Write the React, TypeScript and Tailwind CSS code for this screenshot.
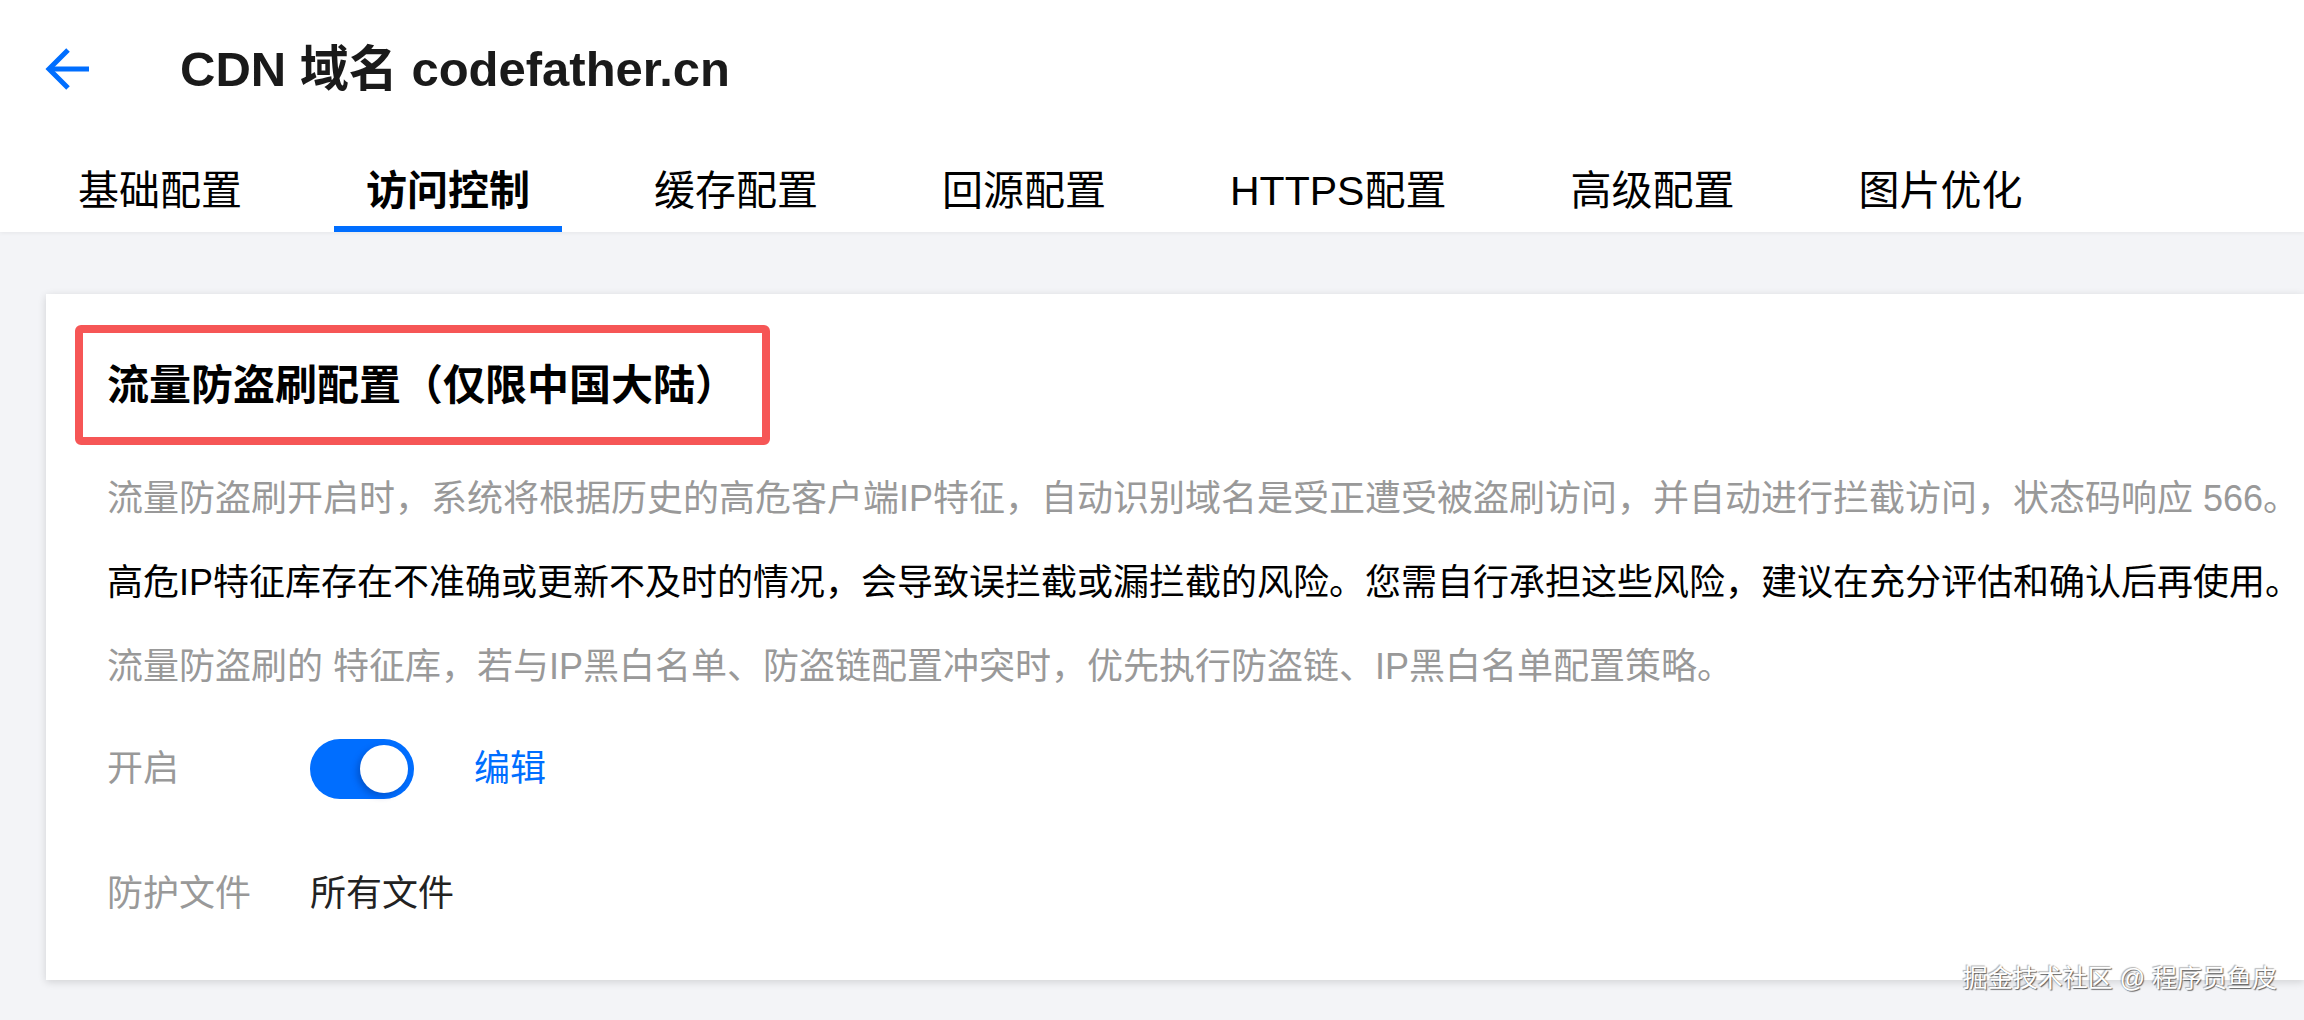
import { useState } from 'react';

const tabs = ['基础配置', '访问控制', '缓存配置', '回源配置', 'HTTPS配置', '高级配置', '图片优化'];

export default function App() {
  const [active, setActive] = useState(1);
  const [enabled, setEnabled] = useState(true);

  return (
    <div className="min-h-[1020px] bg-[#f3f4f7] font-['Liberation_Sans','Noto_Sans_CJK_SC',sans-serif] text-[#000] relative overflow-hidden">
      {/* Header */}
      <div className="bg-white shadow-[0_1px_4px_rgba(0,0,0,0.06)]">
        <div className="h-[137px] flex items-center pl-[45px]">
          <button type="button" className="w-[44px] h-[44px] flex items-center justify-center">
            <svg width="44" height="44" viewBox="0 0 44 44" fill="none" stroke="#006eff" strokeWidth={5}>
              <path d="M44 22H4" />
              <path d="M23 3L4 22l19 19" />
            </svg>
          </button>
          <h1 className="ml-[91px] text-[49px] leading-[56px] font-bold text-[#1a1a1a]">CDN 域名 codefather.cn</h1>
        </div>
        <div className="flex gap-[60px] pl-[46px]">
          {tabs.map((t, i) => (
            <button
              key={t}
              type="button"
              onClick={() => setActive(i)}
              className={
                i === active
                  ? 'px-[32px] pt-[34px] pb-[15px] text-[41px] leading-[40px] font-bold border-b-[6px] border-[#006eff]'
                  : 'px-[32px] pt-[34px] pb-[15px] text-[41px] leading-[40px] border-b-[6px] border-transparent'
              }
            >
              {t}
            </button>
          ))}
        </div>
      </div>

      {/* Card */}
      <div className="mt-[62px] ml-[46px] bg-white shadow-[0_2px_8px_rgba(0,0,0,0.14)] pl-[61px] pt-[68px] pb-[56px] whitespace-nowrap">
        <div className="relative">
          <h2 className="text-[42px] leading-[48px] font-bold">流量防盗刷配置（仅限中国大陆）</h2>
          <div className="absolute left-[-32px] top-[-37px] w-[695px] h-[120px] border-[8px] border-[#f65656] rounded-[6px]" />
        </div>

        <p className="mt-[62px] text-[36px] leading-[54px] text-[#999]">
          流量防盗刷开启时，系统将根据历史的高危客户端IP特征，自动识别域名是受正遭受被盗刷访问，并自动进行拦截访问，状态码响应 566。
        </p>
        <p className="mt-[30px] text-[36px] leading-[54px] text-[#000]">
          高危IP特征库存在不准确或更新不及时的情况，会导致误拦截或漏拦截的风险。您需自行承担这些风险，建议在充分评估和确认后再使用。
        </p>
        <p className="mt-[30px] text-[36px] leading-[54px] text-[#999]">
          流量防盗刷的 特征库，若与IP黑白名单、防盗链配置冲突时，优先执行防盗链、IP黑白名单配置策略。
        </p>

        <div className="mt-[45px] h-[60px] flex items-center">
          <span className="w-[203px] text-[36px] leading-[54px] text-[#999]">开启</span>
          <button
            type="button"
            onClick={() => setEnabled(!enabled)}
            className={
              enabled
                ? 'w-[104px] h-[60px] rounded-full bg-[#006eff] flex items-center justify-end px-[6px]'
                : 'w-[104px] h-[60px] rounded-full bg-[#c8ccd4] flex items-center justify-start px-[6px]'
            }
          >
            <span className="w-[48px] h-[48px] rounded-full bg-white shadow-[-3px_3px_6px_rgba(0,40,120,0.35)]" />
          </button>
          <button type="button" className="ml-[60px] text-[36px] leading-[54px] text-[#006eff]">编辑</button>
        </div>

        <div className="mt-[65px] h-[60px] flex items-center">
          <span className="w-[203px] text-[36px] leading-[54px] text-[#999]">防护文件</span>
          <span className="text-[36px] leading-[54px] text-[#222]">所有文件</span>
        </div>
      </div>

      {/* watermark */}
      <div className="absolute right-[27px] top-[963px] text-[25px] leading-[30px] text-white [text-shadow:1px_1px_1px_rgba(0,0,0,0.6),-1px_-1px_1px_rgba(0,0,0,0.3)]">
        掘金技术社区 @ 程序员鱼皮
      </div>
    </div>
  );
}
